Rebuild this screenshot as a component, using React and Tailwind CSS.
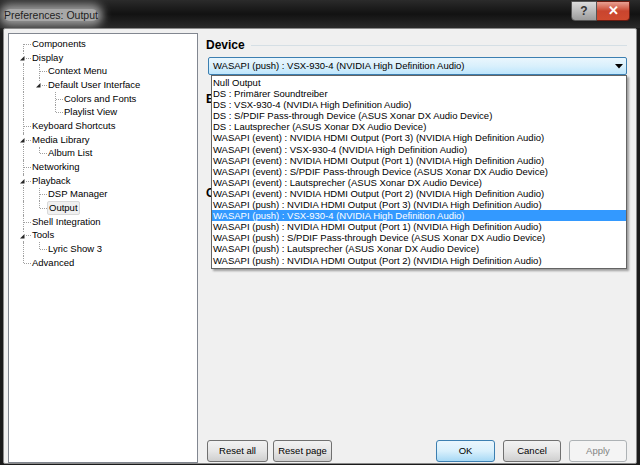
import React from "react";

const tree = [
  { label: "Components" },
  {
    label: "Display",
    children: [
      { label: "Context Menu" },
      {
        label: "Default User Interface",
        children: [{ label: "Colors and Fonts" }, { label: "Playlist View" }],
      },
    ],
  },
  { label: "Keyboard Shortcuts" },
  { label: "Media Library", children: [{ label: "Album List" }] },
  { label: "Networking" },
  {
    label: "Playback",
    children: [{ label: "DSP Manager" }, { label: "Output", selected: true }],
  },
  { label: "Shell Integration" },
  { label: "Tools", children: [{ label: "Lyric Show 3" }] },
  { label: "Advanced" },
];

const devices = [
  "Null Output",
  "DS : Primärer Soundtreiber",
  "DS : VSX-930-4 (NVIDIA High Definition Audio)",
  "DS : S/PDIF Pass-through Device (ASUS Xonar DX Audio Device)",
  "DS : Lautsprecher (ASUS Xonar DX Audio Device)",
  "WASAPI (event) : NVIDIA HDMI Output (Port 3) (NVIDIA High Definition Audio)",
  "WASAPI (event) : VSX-930-4 (NVIDIA High Definition Audio)",
  "WASAPI (event) : NVIDIA HDMI Output (Port 1) (NVIDIA High Definition Audio)",
  "WASAPI (event) : S/PDIF Pass-through Device (ASUS Xonar DX Audio Device)",
  "WASAPI (event) : Lautsprecher (ASUS Xonar DX Audio Device)",
  "WASAPI (event) : NVIDIA HDMI Output (Port 2) (NVIDIA High Definition Audio)",
  "WASAPI (push) : NVIDIA HDMI Output (Port 3) (NVIDIA High Definition Audio)",
  "WASAPI (push) : VSX-930-4 (NVIDIA High Definition Audio)",
  "WASAPI (push) : NVIDIA HDMI Output (Port 1) (NVIDIA High Definition Audio)",
  "WASAPI (push) : S/PDIF Pass-through Device (ASUS Xonar DX Audio Device)",
  "WASAPI (push) : Lautsprecher (ASUS Xonar DX Audio Device)",
  "WASAPI (push) : NVIDIA HDMI Output (Port 2) (NVIDIA High Definition Audio)",
];

// flatten tree into rows with info about which ancestor lines continue
function flatten(nodes, depth, guides, out) {
  nodes.forEach((n, i) => {
    const last = i === nodes.length - 1;
    const first = depth === 0 && i === 0;
    out.push({ ...n, depth, guides, last, first });
    if (n.children) flatten(n.children, depth + 1, [...guides, !last], out);
  });
  return out;
}

const rows = flatten(tree, 0, [], []);

function TreeRow({ row }) {
  return (
    <div className="flex h-[13.7px] items-center">
      {row.guides.map((g, i) => (
        <div key={i} className="relative h-full w-4">
          {g && <div className="absolute left-[8px] top-0 h-full border-l border-dotted border-[#a0a0a0]" />}
        </div>
      ))}
      <div className="relative h-full w-4">
        <div
          className={
            "absolute left-[8px] border-l border-dotted border-[#a0a0a0] " +
            (row.first ? "top-1/2 h-1/2" : row.last ? "top-0 h-1/2" : "top-0 h-full")
          }
        />
        <div className="absolute left-[9px] top-1/2 w-[7px] border-t border-dotted border-[#a0a0a0]" />
        {row.children && (
          <div className="absolute left-[3px] top-[3px] h-[8px] w-[8px] bg-white">
            <svg width="8" height="8" viewBox="0 0 8 8">
              <path d="M6.5 2 L6.5 6.5 L2 6.5 Z" fill="#262626" />
            </svg>
          </div>
        )}
      </div>
      <span
        className={
          "whitespace-nowrap px-[1px] leading-[12px] " +
          (row.selected ? "rounded-[2px] border border-[#d9d9d9] bg-[#f0f0f0]" : "")
        }
      >
        {row.label}
      </span>
    </div>
  );
}

function Btn({ children, variant, className = "" }) {
  const styles = {
    normal: "border-[#707070] bg-gradient-to-b from-[#f2f2f2] via-[#e6e6e6] to-[#cfcfcf] text-black",
    focus: "border-[#3c7fb1] bg-gradient-to-b from-[#eaf6fd] via-[#d9f0fc] to-[#a7d9f5] text-black",
    disabled: "border-[#adb2b5] bg-[#f4f4f4] text-[#838383]",
  };
  return (
    <div
      className={
        "flex h-[22px] items-center justify-center rounded-[3px] border " +
        styles[variant || "normal"] +
        " " +
        className
      }
    >
      {children}
    </div>
  );
}

export default function App() {
  return (
    <div
      className="flex h-[465px] w-[640px] flex-col overflow-hidden bg-[#1a1a1a] text-[9.5px] text-black"
      style={{ fontFamily: "'Liberation Sans', Arial, sans-serif" }}
    >
      {/* title bar */}
      <div className="flex h-[28px] shrink-0 items-start bg-gradient-to-b from-[#2b2b2b] via-[#121212] to-[#2a2a2a]">
        <div className="ml-[4px] mt-[9px] rounded-[6px] bg-[#a8a8a8] text-[10.5px] leading-[12px] text-[#1e1e1e] shadow-[0_0_8px_5px_#9a9a9a]">
          Preferences: Output
        </div>
        <div className="ml-auto mr-[10px] mt-[1px] flex h-[20px]">
          <div className="flex w-[26px] items-center justify-center rounded-bl-[4px] border border-[#555] bg-gradient-to-b from-[#dcdcdc] to-[#9c9c9c] text-[12px] font-bold text-[#333]">
            ?
          </div>
          <div className="flex w-[33px] items-center justify-center rounded-br-[4px] border border-l-0 border-[#6b1b10] bg-gradient-to-b from-[#e8a093] via-[#c9452e] to-[#d04a2f] text-[13px] font-bold text-white">
            ✕
          </div>
        </div>
      </div>

      {/* window body */}
      <div className="mx-[3px] mb-[1px] flex min-h-0 flex-1 rounded-[2px] border border-[#8a8a8a] bg-[#f0f0f0] pb-0 pl-[4px] pr-[5px] pt-[4px]">
        {/* tree */}
        <div className="w-[190px] shrink-0 border border-[#828790] bg-white pl-[6px] pt-[3px]">
          {rows.map((r, i) => (
            <TreeRow key={i} row={r} />
          ))}
        </div>

        {/* right side */}
        <div className="relative flex flex-1 flex-col pl-[8px]">
          <div className="mt-[3px] flex items-center">
            <span className="text-[12px] font-bold">Device</span>
            <div className="ml-[6px] mr-[4px] flex-1 border-t border-[#d5dfe5]" />
          </div>

          <div className="relative ml-[2px] mr-[4px] mt-[3px] flex h-[18px] items-center rounded-[2px] border border-[#3c7fb1] bg-gradient-to-b from-[#eaf6fd] via-[#d9f0fc] to-[#bee6fd] pl-[4px]">
            <span className="whitespace-nowrap">WASAPI (push) : VSX-930-4 (NVIDIA High Definition Audio)</span>
            <svg className="ml-auto mr-[3px]" width="8" height="5" viewBox="0 0 8 5">
              <path d="M0 0 L8 0 L4 4.5 Z" fill="#000" />
            </svg>
          </div>

          {/* hidden section headings behind the list */}
          <div className="mt-[15px] flex items-center">
            <span className="text-[12px] font-bold">E</span>
            <div className="ml-[6px] mr-[4px] flex-1 border-t border-[#d5dfe5]" />
          </div>
          <div className="mt-[76px] flex items-center">
            <span className="text-[12px] font-bold">C</span>
            <div className="ml-[6px] mr-[4px] flex-1 border-t border-[#d5dfe5]" />
          </div>

          <div className="mt-auto flex items-center pb-[1px] pl-[1px] pr-[4px]">
            <Btn className="w-[61px]">Reset all</Btn>
            <Btn className="ml-[5px] w-[59px]">Reset page</Btn>
            <Btn variant="focus" className="ml-auto w-[59px]">OK</Btn>
            <Btn className="ml-[8px] w-[58px]">Cancel</Btn>
            <Btn variant="disabled" className="ml-[8px] w-[58px]">Apply</Btn>
          </div>

          {/* open dropdown list */}
          <div className="absolute left-[13px] right-[4px] top-[42px] border border-[#646464] bg-white pb-[2px] pt-[1px] shadow-[2px_2px_2px_rgba(0,0,0,0.35)]">
            {devices.map((d, i) => (
              <div
                key={i}
                className={
                  "h-[11.1px] whitespace-nowrap pl-[1px] leading-[11px] " +
                  (i === 12 ? "bg-[#3399ff] text-white" : "")
                }
              >
                {d}
              </div>
            ))}
          </div>
        </div>
      </div>
    </div>
  );
}
